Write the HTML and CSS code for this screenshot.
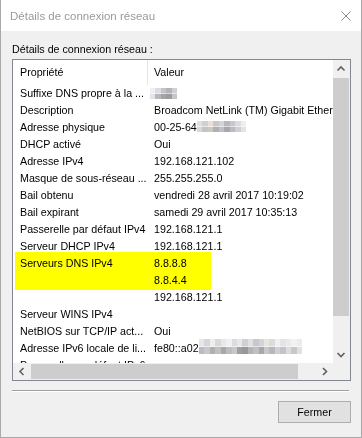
FILE: index.html
```html
<!DOCTYPE html>
<html lang="fr">
<head>
<meta charset="utf-8">
<title>Détails de connexion réseau</title>
<link rel="stylesheet" href="styles.css">
</head>
<body>
<div class="window">
  <div class="titlebar">
    <span class="title">Détails de connexion réseau</span>
    <svg class="close" width="10" height="10" viewBox="0 0 10 10"><path d="M0.5 0.5L9.5 9.5M9.5 0.5L0.5 9.5" stroke="#8c8c8c" stroke-width="1"/></svg>
  </div>
  <div class="content">
    <div class="label">Détails de connexion réseau :</div>
    <div class="listbox">
      <div class="view">
        <div class="header">
          <div class="hcell c1">Propriété</div>
          <div class="hcell c2">Valeur</div>
        </div>
        <div class="row"><span class="c1">Suffixe DNS propre à la ...</span><span class="c2"><span class="blur blur-suffix"></span></span></div>
        <div class="row"><span class="c1">Description</span><span class="c2">Broadcom NetLink (TM) Gigabit Ethernet</span></div>
        <div class="row"><span class="c1">Adresse physique</span><span class="c2">00-25-64<span class="blur blur-mac"></span></span></div>
        <div class="row"><span class="c1">DHCP activé</span><span class="c2">Oui</span></div>
        <div class="row"><span class="c1">Adresse IPv4</span><span class="c2">192.168.121.102</span></div>
        <div class="row"><span class="c1">Masque de sous-réseau ...</span><span class="c2">255.255.255.0</span></div>
        <div class="row"><span class="c1">Bail obtenu</span><span class="c2">vendredi 28 avril 2017 10:19:02</span></div>
        <div class="row"><span class="c1">Bail expirant</span><span class="c2">samedi 29 avril 2017 10:35:13</span></div>
        <div class="row"><span class="c1">Passerelle par défaut IPv4</span><span class="c2">192.168.121.1</span></div>
        <div class="row"><span class="c1">Serveur DHCP IPv4</span><span class="c2">192.168.121.1</span></div>
        <div class="row"><span class="c1">Serveurs DNS IPv4</span><span class="c2">8.8.8.8</span></div>
        <div class="row"><span class="c1"></span><span class="c2">8.8.4.4</span></div>
        <div class="row"><span class="c1"></span><span class="c2">192.168.121.1</span></div>
        <div class="row"><span class="c1">Serveur WINS IPv4</span><span class="c2"></span></div>
        <div class="row"><span class="c1">NetBIOS sur TCP/IP act...</span><span class="c2">Oui</span></div>
        <div class="row"><span class="c1">Adresse IPv6 locale de li...</span><span class="c2">fe80::a02<span class="blur blur-v6"></span></span></div>
        <div class="row"><span class="c1">Passerelle par défaut IPv6</span><span class="c2"></span></div>
        <div class="highlight"></div>
      </div>
      <div class="vscroll">
        <div class="sbtn"><svg width="17" height="17" viewBox="0 0 17 17"><path d="M4.5 10.5L8 7L11.5 10.5" fill="none" stroke="#606060" stroke-width="1.6"/></svg></div>
        <div class="vtrack"><div class="vthumb"></div></div>
        <div class="sbtn"><svg width="17" height="17" viewBox="0 0 17 17"><path d="M4.5 7L8 10.5L11.5 7" fill="none" stroke="#606060" stroke-width="1.6"/></svg></div>
      </div>
      <div class="hscroll">
        <div class="sbtn"><svg width="17" height="17" viewBox="0 0 17 17"><path d="M10.5 5L7 8.5L10.5 12" fill="none" stroke="#606060" stroke-width="1.6"/></svg></div>
        <div class="htrack"><div class="hthumb"></div></div>
        <div class="sbtn"><svg width="17" height="17" viewBox="0 0 17 17"><path d="M7 5L10.5 8.5L7 12" fill="none" stroke="#606060" stroke-width="1.6"/></svg></div>
      </div>
      <div class="corner"></div>
    </div>
    <div class="sep"></div>
    <div class="buttons"><button class="btn">Fermer</button></div>
  </div>
</div>
</body>
</html>
```

FILE: styles.css
```css
html, body {
  margin: 0;
  padding: 0;
  background: #ffffff;
}

.window {
  width: 362px;
  height: 438px;
  box-sizing: border-box;
  border: 1px solid #a9a9a9;
  border-top: 0;
  display: flex;
  flex-direction: column;
  background: #f0f0f0;
  font-family: "Liberation Sans", Arial, sans-serif;
  color: #000;
}

.titlebar {
  height: 31px;
  flex-shrink: 0;
  background: #ffffff;
  display: flex;
  align-items: center;
  justify-content: space-between;
  padding: 0 10px 0 9px;
}

.title {
  font-size: 11.5px;
  color: #9a9a9a;
}

.close {
  display: block;
  margin-top: 1px;
}

.content {
  flex: 1;
  padding: 12px 11px 0 11px;
  font-size: 10.7px;
}

.label {
  height: 13px;
  line-height: 13px;
  margin-bottom: 3px;
  white-space: nowrap;
}

.listbox {
  display: grid;
  grid-template-columns: 320px 17px;
  grid-template-rows: 303px 17px;
  width: max-content;
  border: 1px solid #828790;
  background: #ffffff;
}

.view {
  position: relative;
  overflow: hidden;
}

.header {
  display: flex;
  height: 25px;
}

.hcell {
  line-height: 25px;
  height: 25px;
}

.row {
  display: flex;
  height: 17px;
  line-height: 17px;
  white-space: nowrap;
}

.c1 {
  width: 135px;
  flex-shrink: 0;
  box-sizing: border-box;
  padding-left: 7px;
  overflow: hidden;
}

.hcell.c1 {
  border-right: 1px solid #e5e5e5;
}

.c2 {
  padding-left: 6px;
}

.blur {
  display: inline-block;
  vertical-align: top;
}

.blur-suffix {
  width: 27px;
  height: 11px;
  margin-top: 3px;
  margin-left: -4px;
  background:
    linear-gradient(to right, #eef0f6 0 20%, #dcdde2 20% 40%, #c4c4c8 40% 60%, #b4b4b6 60% 80%, #d0d0d2 80%) top / 100% 50% no-repeat,
    linear-gradient(to right, #e2e4ea 0 20%, #b8b8bc 20% 40%, #a4a4a6 40% 60%, #9c9c9e 60% 80%, #c6c6c8 80%) bottom / 100% 50% no-repeat;
}

.blur-mac {
  width: 49px;
  height: 11px;
  margin-top: 2px;
  background:
    linear-gradient(to right, #e0e0e4 0 11.1%, #d0d0d4 11.1% 22.2%, #e8e0d4 22.2% 33.3%, #c8c8cc 33.3% 44.4%, #d4d4d8 44.4% 55.6%, #b8b8bc 55.6% 66.7%, #c8c8cc 66.7% 77.8%, #dcdce0 77.8% 88.9%, #eeeef0 88.9%) top / 100% 50% no-repeat,
    linear-gradient(to right, #d8d8dc 0 11.1%, #c4c4c8 11.1% 22.2%, #ccc8c0 22.2% 33.3%, #b0b0b4 33.3% 44.4%, #c0c0c4 44.4% 55.6%, #a8a8ac 55.6% 66.7%, #bcbcc0 66.7% 77.8%, #d0d0d4 77.8% 88.9%, #e4e4e8 88.9%) bottom / 100% 50% no-repeat;
}

.blur-v6 {
  width: 103px;
  height: 15px;
  margin-top: -1px;
  background:
    linear-gradient(to right, #e4e6ec 0 5.26%, #d6d6da 5.26% 10.53%, #eeeeee 10.53% 15.79%, #d8d8dc 15.79% 21.05%, #e8e8ec 21.05% 26.32%, #f0f0f4 26.32% 31.58%, #dcdcdc 31.58% 36.84%, #e8e8ec 36.84% 42.11%, #d0d0d4 42.11% 47.37%, #e0e0e4 47.37% 52.63%, #c8c8cc 52.63% 57.89%, #d4d4d8 57.89% 63.16%, #e8e4e0 63.16% 68.42%, #dcdcdc 68.42% 73.68%, #f0f0f0 73.68% 78.95%, #e4e4e8 78.95% 84.21%, #eaeaea 84.21% 89.47%, #f2f2f2 89.47% 94.74%, #ececec 94.74%) top / 100% 50% no-repeat,
    linear-gradient(to right, #b8bcc4 0 5.26%, #c8c8cc 5.26% 10.53%, #b0b0b0 10.53% 15.79%, #c4c0bc 15.79% 21.05%, #a8a8ac 21.05% 26.32%, #bcbcc0 26.32% 31.58%, #c8c8c8 31.58% 36.84%, #a0a0a4 36.84% 42.11%, #989898 42.11% 47.37%, #b4b4b8 47.37% 52.63%, #c0c0c4 52.63% 57.89%, #a8a8a8 57.89% 63.16%, #c8c8cc 63.16% 68.42%, #b8b8bc 68.42% 73.68%, #d0d0d4 73.68% 78.95%, #c4c4c8 78.95% 84.21%, #dcdcdc 84.21% 89.47%, #c8c8cc 89.47% 94.74%, #e0e0e0 94.74%) bottom / 100% 50% no-repeat;
}

.highlight {
  position: absolute;
  left: 2px;
  top: 192px;
  width: 196px;
  height: 38px;
  background: #ffff00;
  mix-blend-mode: multiply;
}

.vscroll {
  display: flex;
  flex-direction: column;
  background: #f0f0f0;
}

.hscroll {
  display: flex;
  background: #f0f0f0;
}

.sbtn {
  width: 17px;
  height: 17px;
  flex-shrink: 0;
}

.sbtn svg {
  display: block;
}

.vtrack {
  flex: 1;
  padding: 1px 1px 0 0;
}

.vthumb {
  height: 238px;
  background: #cdcdcd;
}

.htrack {
  flex: 1;
  padding: 1px 0 1px 1px;
}

.hthumb {
  width: 267px;
  height: 15px;
  background: #cdcdcd;
}

.corner {
  background: #f0f0f0;
}

.sep {
  width: 337px;
  margin-top: 9px;
  border-top: 1px solid #a0a0a0;
  border-bottom: 1px solid #ffffff;
}

.buttons {
  display: flex;
  justify-content: flex-end;
  margin-top: 9px;
  margin-right: -1px;
}

.btn {
  width: 73px;
  height: 22px;
  margin: 0;
  padding: 0;
  border: 1px solid #adadad;
  background: #e1e1e1;
  font-family: "Liberation Sans", Arial, sans-serif;
  font-size: 10.7px;
  color: #000;
}
```
